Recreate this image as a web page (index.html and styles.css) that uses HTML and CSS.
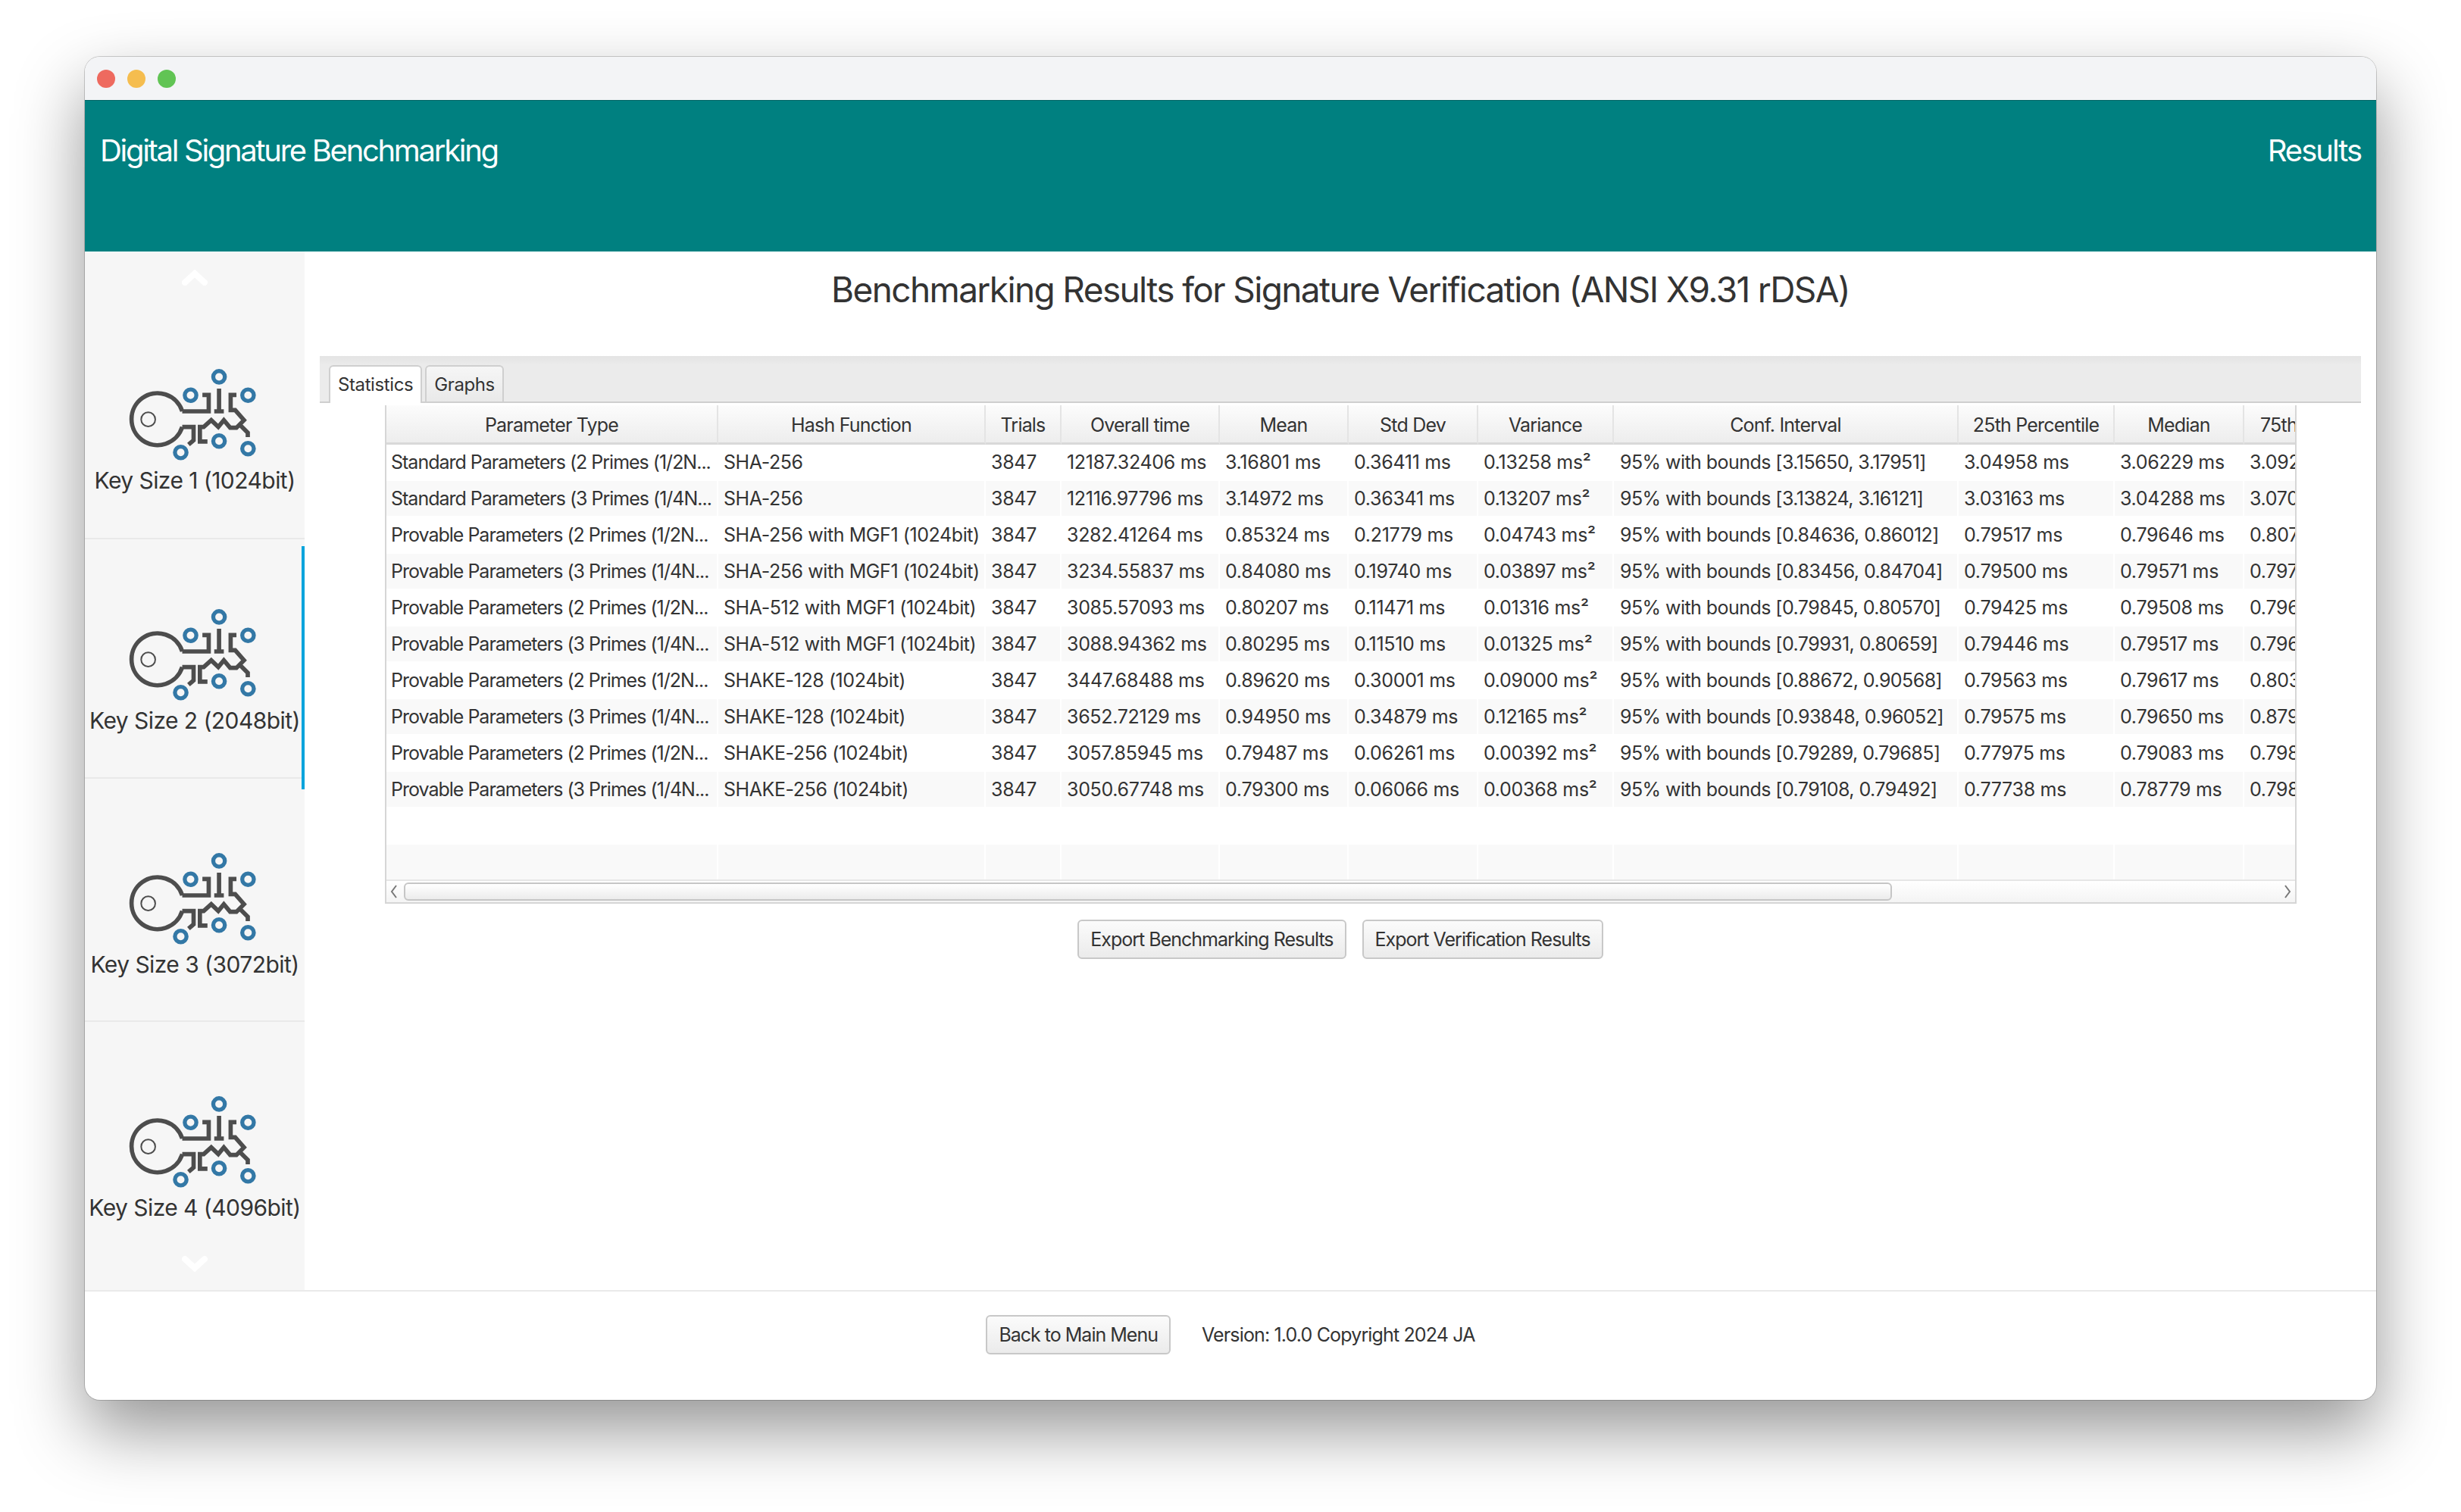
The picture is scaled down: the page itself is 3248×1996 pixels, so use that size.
FILE: index.html
```html
<!doctype html>
<html lang="en">
<head>
  <meta charset="UTF-8">
  <title>Digital Signature Benchmarking</title>
  <link rel="stylesheet" href="styles.css">
</head>
<body>
<svg class="defs" width="0" height="0">
  <symbol id="key-icon" viewBox="0 0 505 363">
    <g fill="none" stroke="#4d4d4d" stroke-width="17">
      <path d="M212 168 A103 103 0 1 0 212 230 M212 168 H317 V103 H292"/>
      <path d="M212 230 H257 V283 L237 300"/>
      <path d="M358 78 V168 M339 168 H377"/>
      <path d="M427 103 H404 V163 H422 L457 203 L427 233 H402 L377 203 L355 230 L327 203 L297 230 H282 V288 H312"/>
      <path d="M442 223 L472 253 V270"/>
      <circle cx="77" cy="200" r="28" stroke-width="6"/>
    </g>
    <g fill="none" stroke="#3378a6" stroke-width="16">
      <circle cx="358" cy="31" r="23"/>
      <circle cx="245" cy="104" r="23"/>
      <circle cx="473" cy="104" r="23"/>
      <circle cx="358" cy="286" r="23"/>
      <circle cx="473" cy="316" r="23"/>
      <circle cx="206" cy="331" r="23"/>
    </g>
  </symbol>
</svg>

<div class="window">
  <div class="titlebar">
    <span class="light red"></span>
    <span class="light yellow"></span>
    <span class="light green"></span>
  </div>
  <header class="app-header">
    <span class="app-name">Digital Signature Benchmarking</span>
    <span>Results</span>
  </header>

  <div class="content">
    <aside class="sidebar">
      <svg class="chevron up" viewBox="0 0 34 21"><path d="M4 17 L17 5 L30 17"/></svg>
      <div class="key-item">
        <svg class="key-icon"><use href="#key-icon"/></svg>
        <span>Key Size 1 (1024bit)</span>
      </div>
      <div class="key-item selected">
        <svg class="key-icon"><use href="#key-icon"/></svg>
        <span>Key Size 2 (2048bit)</span>
      </div>
      <div class="key-item">
        <svg class="key-icon"><use href="#key-icon"/></svg>
        <span>Key Size 3 (3072bit)</span>
      </div>
      <div class="key-item">
        <svg class="key-icon"><use href="#key-icon"/></svg>
        <span>Key Size 4 (4096bit)</span>
      </div>
      <svg class="chevron down" viewBox="0 0 34 21"><path d="M4 4 L17 16 L30 4"/></svg>
    </aside>

    <main class="main">
      <h1 class="page-title">Benchmarking Results for Signature Verification (ANSI X9.31 rDSA)</h1>

      <div class="tab-bar">
        <div class="tab active">Statistics</div>
        <div class="tab">Graphs</div>
      </div>

      <div class="table-wrap">
        <div class="table-view">
          <table>
            <colgroup>
              <col class="c-param"><col class="c-hash"><col class="c-trials"><col class="c-time"><col class="c-mean"><col class="c-std"><col class="c-var"><col class="c-conf"><col class="c-q1"><col class="c-median"><col class="c-q3">
            </colgroup>
            <thead>
              <tr>
                <th>Parameter Type</th><th>Hash Function</th><th>Trials</th><th>Overall time</th><th>Mean</th><th>Std Dev</th><th>Variance</th><th>Conf. Interval</th><th>25th Percentile</th><th>Median</th><th>75th Percentile</th>
              </tr>
            </thead>
            <tbody>
              <tr><td>Standard Parameters (2 Primes (1/2N...</td><td>SHA-256</td><td>3847</td><td>12187.32406 ms</td><td>3.16801 ms</td><td>0.36411 ms</td><td>0.13258 ms²</td><td>95% with bounds [3.15650, 3.17951]</td><td>3.04958 ms</td><td>3.06229 ms</td><td>3.092</td></tr>
              <tr><td>Standard Parameters (3 Primes (1/4N...</td><td>SHA-256</td><td>3847</td><td>12116.97796 ms</td><td>3.14972 ms</td><td>0.36341 ms</td><td>0.13207 ms²</td><td>95% with bounds [3.13824, 3.16121]</td><td>3.03163 ms</td><td>3.04288 ms</td><td>3.070</td></tr>
              <tr><td>Provable Parameters (2 Primes (1/2N...</td><td>SHA-256 with MGF1 (1024bit)</td><td>3847</td><td>3282.41264 ms</td><td>0.85324 ms</td><td>0.21779 ms</td><td>0.04743 ms²</td><td>95% with bounds [0.84636, 0.86012]</td><td>0.79517 ms</td><td>0.79646 ms</td><td>0.807</td></tr>
              <tr><td>Provable Parameters (3 Primes (1/4N...</td><td>SHA-256 with MGF1 (1024bit)</td><td>3847</td><td>3234.55837 ms</td><td>0.84080 ms</td><td>0.19740 ms</td><td>0.03897 ms²</td><td>95% with bounds [0.83456, 0.84704]</td><td>0.79500 ms</td><td>0.79571 ms</td><td>0.797</td></tr>
              <tr><td>Provable Parameters (2 Primes (1/2N...</td><td>SHA-512 with MGF1 (1024bit)</td><td>3847</td><td>3085.57093 ms</td><td>0.80207 ms</td><td>0.11471 ms</td><td>0.01316 ms²</td><td>95% with bounds [0.79845, 0.80570]</td><td>0.79425 ms</td><td>0.79508 ms</td><td>0.796</td></tr>
              <tr><td>Provable Parameters (3 Primes (1/4N...</td><td>SHA-512 with MGF1 (1024bit)</td><td>3847</td><td>3088.94362 ms</td><td>0.80295 ms</td><td>0.11510 ms</td><td>0.01325 ms²</td><td>95% with bounds [0.79931, 0.80659]</td><td>0.79446 ms</td><td>0.79517 ms</td><td>0.796</td></tr>
              <tr><td>Provable Parameters (2 Primes (1/2N...</td><td>SHAKE-128 (1024bit)</td><td>3847</td><td>3447.68488 ms</td><td>0.89620 ms</td><td>0.30001 ms</td><td>0.09000 ms²</td><td>95% with bounds [0.88672, 0.90568]</td><td>0.79563 ms</td><td>0.79617 ms</td><td>0.803</td></tr>
              <tr><td>Provable Parameters (3 Primes (1/4N...</td><td>SHAKE-128 (1024bit)</td><td>3847</td><td>3652.72129 ms</td><td>0.94950 ms</td><td>0.34879 ms</td><td>0.12165 ms²</td><td>95% with bounds [0.93848, 0.96052]</td><td>0.79575 ms</td><td>0.79650 ms</td><td>0.879</td></tr>
              <tr><td>Provable Parameters (2 Primes (1/2N...</td><td>SHAKE-256 (1024bit)</td><td>3847</td><td>3057.85945 ms</td><td>0.79487 ms</td><td>0.06261 ms</td><td>0.00392 ms²</td><td>95% with bounds [0.79289, 0.79685]</td><td>0.77975 ms</td><td>0.79083 ms</td><td>0.798</td></tr>
              <tr><td>Provable Parameters (3 Primes (1/4N...</td><td>SHAKE-256 (1024bit)</td><td>3847</td><td>3050.67748 ms</td><td>0.79300 ms</td><td>0.06066 ms</td><td>0.00368 ms²</td><td>95% with bounds [0.79108, 0.79492]</td><td>0.77738 ms</td><td>0.78779 ms</td><td>0.798</td></tr>
              <tr class="empty"><td></td><td></td><td></td><td></td><td></td><td></td><td></td><td></td><td></td><td></td><td></td></tr>
              <tr class="empty"><td></td><td></td><td></td><td></td><td></td><td></td><td></td><td></td><td></td><td></td><td></td></tr>
            </tbody>
          </table>
        </div>
        <div class="scrollbar">
          <svg class="arrow" viewBox="0 0 10 20"><path d="M8 2 L2 10 L8 18"/></svg>
          <div class="thumb"></div>
          <svg class="arrow" viewBox="0 0 10 20"><path d="M2 2 L8 10 L2 18"/></svg>
        </div>
      </div>

      <div class="export-row">
        <button class="btn">Export Benchmarking Results</button>
        <button class="btn">Export Verification Results</button>
      </div>
    </main>
  </div>

  <footer class="app-footer">
    <button class="btn">Back to Main Menu</button>
    <span class="version">Version: 1.0.0 Copyright 2024 JA</span>
  </footer>
</div>
</body>
</html>
```

FILE: styles.css
```css
* {
  margin: 0;
  padding: 0;
  box-sizing: border-box;
}
html, body {
  width: 100%;
  height: 100%;
  background: #fff;
  overflow: hidden;
}
body {
  padding: 75px 112px 0;
  font-family: Inter, "Liberation Sans", sans-serif;
  color: #333;
}
.defs {
  position: absolute;
}
.window {
  width: 3024px;
  height: 1773px;
  display: flex;
  flex-direction: column;
  background: #fff;
  border-radius: 20px;
  box-shadow: 0 0 0 1px rgba(0, 0, 0, .18), 0 40px 90px rgba(0, 0, 0, .42);
  overflow: hidden;
}

.titlebar {
  height: 57px;
  flex: none;
  display: flex;
  align-items: center;
  gap: 16px;
  padding: 0 16px;
  background: #f3f4f6;
}
.light {
  width: 24px;
  height: 24px;
  border-radius: 50%;
}
.red { background: #ee6a5f; }
.yellow { background: #f5bd4f; }
.green { background: #61c454; }

.app-header {
  height: 200px;
  flex: none;
  display: flex;
  justify-content: space-between;
  padding: 46px 20px 0 20px;
  background: #008080;
  border-top: 1px solid #006464;
  color: #fff;
  font-size: 40px;
  line-height: 40px;
  letter-spacing: -2px;
}
.app-name {
  letter-spacing: -2.3px;
}

.content {
  flex: 1;
  display: flex;
  min-height: 0;
}

.sidebar {
  position: relative;
  width: 290px;
  flex: none;
  padding-top: 61px;
  background: #f6f6f6;
  overflow: hidden;
}
.chevron {
  position: absolute;
  left: 128px;
  width: 34px;
  height: 21px;
}
.chevron path {
  fill: none;
  stroke: #fff;
  stroke-width: 8;
  stroke-linecap: round;
  stroke-linejoin: miter;
}
.chevron.up { top: 24px; }
.chevron.down { bottom: 24px; }

.key-item {
  position: relative;
  height: 319px;
  padding-top: 94px;
  display: flex;
  flex-direction: column;
  align-items: center;
  border-bottom: 2px solid #e9e9e9;
  font-size: 30px;
  line-height: 36px;
  letter-spacing: -.55px;
  white-space: nowrap;
}
.key-item + .key-item {
  height: 321px;
  padding-top: 98px;
}
.key-item.selected {
  height: 316px;
  padding-top: 92px;
}
.key-item:last-of-type {
  border-bottom: 0;
}
.key-item.selected::after {
  content: "";
  position: absolute;
  top: 9px;
  right: 0;
  width: 4px;
  height: 321px;
  background: #00a4dc;
}
.key-icon {
  width: 168px;
  height: 121px;
  flex: none;
  margin: 0 6px 8px 0;
}

.main {
  flex: 1;
  min-width: 0;
  padding: 0 20px;
  display: flex;
  flex-direction: column;
}
.page-title {
  height: 138px;
  flex: none;
  padding-top: 25px;
  text-align: center;
  font-size: 46px;
  line-height: 50px;
  font-weight: 400;
  letter-spacing: -1.62px;
}

.tab-bar {
  height: 62px;
  flex: none;
  display: flex;
  align-items: flex-end;
  gap: 4px;
  padding-left: 12px;
  background: linear-gradient(#e4e4e4, #ebebeb 20%);
  border-bottom: 2px solid #cfcfcf;
}
.tab {
  height: 48px;
  padding: 0 10px;
  display: flex;
  align-items: center;
  background: linear-gradient(#f6f6f6, #e9e9e9);
  border: 2px solid #cfcfcf;
  border-bottom: 0;
  border-radius: 6px 6px 0 0;
  font-size: 24px;
  letter-spacing: -.4px;
}
.tab.active {
  height: 50px;
  margin-bottom: -2px;
  padding-bottom: 2px;
  background: #fff;
}

.table-wrap {
  height: 658px;
  flex: none;
  margin: 3px 85px 0 86px;
  display: flex;
  flex-direction: column;
  border: solid #d6d6d6;
  border-width: 0 2px 2px;
}
.table-view {
  height: 626px;
  flex: none;
  overflow: hidden;
}
table {
  table-layout: fixed;
  width: 2661px;
  border-collapse: separate;
  border-spacing: 0;
  font-size: 25px;
}
.c-param { width: 438px; }
.c-hash { width: 353px; }
.c-trials { width: 100px; }
.c-time { width: 209px; }
.c-mean { width: 170px; }
.c-std { width: 171px; }
.c-var { width: 179px; }
.c-conf { width: 455px; }
.c-q1 { width: 206px; }
.c-median { width: 171px; }
.c-q3 { width: 209px; }
th {
  height: 52px;
  padding-top: 3px;
  font-weight: 400;
  letter-spacing: -.8px;
  white-space: nowrap;
  overflow: hidden;
  background: linear-gradient(#fcfcfc, #ededed);
  border-right: 2px solid #e4e4e4;
  border-bottom: 3px solid #d9d9d9;
}
td {
  height: 48px;
  padding: 0 0 0 7px;
  letter-spacing: -.3px;
  white-space: nowrap;
  overflow: hidden;
  border-right: 2px solid #fff;
  border-bottom: 2px solid #fff;
}
td:nth-child(1) {
  padding-left: 6px;
  letter-spacing: -1px;
}
td:nth-child(2) {
  letter-spacing: -.42px;
}
td:nth-child(8) {
  padding-left: 8px;
  letter-spacing: -.55px;
}
tbody tr:nth-child(even) td {
  background: #f9f9f9;
}

.scrollbar {
  height: 30px;
  flex: none;
  display: flex;
  align-items: center;
  gap: 8px;
  padding: 0 5px;
  background: linear-gradient(#fff, #f4f4f4);
  border-top: 2px solid #e6e6e6;
}
.arrow {
  width: 10px;
  height: 20px;
  flex: none;
}
.arrow path {
  fill: none;
  stroke: #777;
  stroke-width: 2;
}
.arrow:last-child {
  margin-left: auto;
}
.thumb {
  width: 1964px;
  height: 24px;
  background: linear-gradient(#fff, #ececec);
  border: 2px solid #c6c6c6;
  border-radius: 6px;
}

.export-row {
  margin-top: 21px;
  display: flex;
  justify-content: center;
  gap: 21px;
}
.btn {
  height: 52px;
  padding: 0 15px;
  background: linear-gradient(#fbfbfb, #ebebeb);
  border: 2px solid #c8c8c8;
  border-radius: 6px;
  font-family: inherit;
  font-size: 25px;
  letter-spacing: -1px;
  color: #333;
}

.app-footer {
  height: 145px;
  flex: none;
  display: flex;
  align-items: center;
  justify-content: center;
  gap: 41px;
  padding-bottom: 30px;
  border-top: 2px solid #eaeaea;
  font-size: 25px;
}
.version {
  letter-spacing: -.85px;
}
```
